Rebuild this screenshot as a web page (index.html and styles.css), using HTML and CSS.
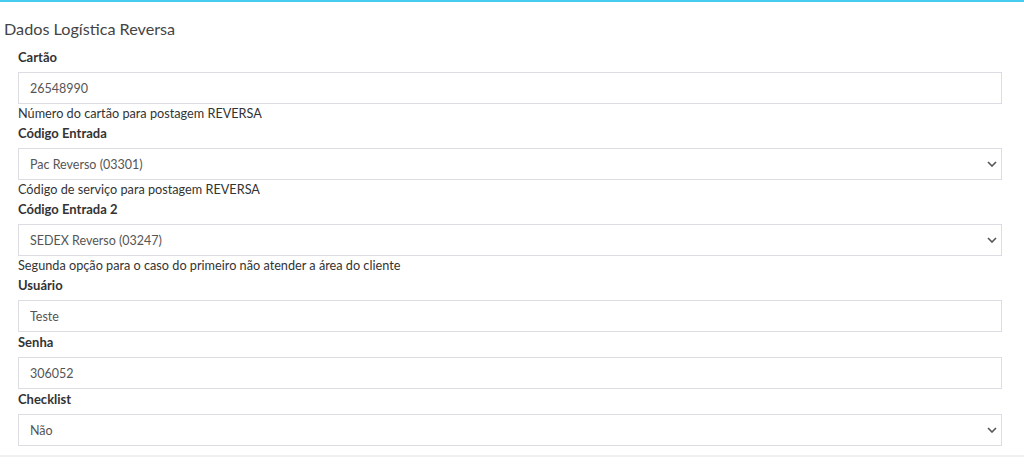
FILE: index.html
```html
<!DOCTYPE html>
<html lang="pt-BR">
<head>
<meta charset="utf-8">
<title>Dados Logística Reversa</title>
<link rel="stylesheet" href="styles.css">
</head>
<body>
<div class="box">
  <div class="box-header"><h3 class="box-title">Dados Logística Reversa</h3></div>
  <div class="box-body">
    <div class="form-group">
      <label class="label">Cartão</label>
      <input class="form-control" type="text" value="26548990">
      <p class="help">Número do cartão para postagem REVERSA</p>
    </div>
    <div class="form-group">
      <label class="label">Código Entrada</label>
      <div class="select-wrap">
        <select class="form-control"><option>Pac Reverso (03301)</option></select>
        <svg class="chev" width="10" height="6" viewBox="0 0 10 6"><path d="M1 1l4 4 4-4" fill="none" stroke="#555" stroke-width="1.6"/></svg>
      </div>
      <p class="help">Código de serviço para postagem REVERSA</p>
    </div>
    <div class="form-group">
      <label class="label">Código Entrada 2</label>
      <div class="select-wrap">
        <select class="form-control"><option>SEDEX Reverso (03247)</option></select>
        <svg class="chev" width="10" height="6" viewBox="0 0 10 6"><path d="M1 1l4 4 4-4" fill="none" stroke="#555" stroke-width="1.6"/></svg>
      </div>
      <p class="help">Segunda opção para o caso do primeiro não atender a área do cliente</p>
    </div>
    <div class="form-group">
      <label class="label">Usuário</label>
      <input class="form-control" type="text" value="Teste">
    </div>
    <div class="form-group">
      <label class="label">Senha</label>
      <input class="form-control" type="text" value="306052">
    </div>
    <div class="form-group">
      <label class="label">Checklist</label>
      <div class="select-wrap">
        <select class="form-control"><option>Não</option></select>
        <svg class="chev" width="10" height="6" viewBox="0 0 10 6"><path d="M1 1l4 4 4-4" fill="none" stroke="#555" stroke-width="1.6"/></svg>
      </div>
    </div>
  </div>
</div>
</body>
</html>
```
FILE: styles.css
```css
html, body {
  margin: 0;
  padding: 0;
  background: #fff;
}
body {
  font-family: "Lato", "Liberation Sans", sans-serif;
  font-size: 13px;
  color: #333;
}
.box {
  border-top: 2px solid #45cbef;
  border-bottom: 2px solid #f0f0f0;
  background: #fff;
}
.box-header {
  padding: 17px 4px 0;
}
.box-title {
  margin: 0;
  font-size: 16.2px;
  font-weight: normal;
  line-height: 20px;
  color: #444;
}
.box-body {
  padding: 8px 22px 9px 18px;
}
.label {
  display: block;
  font-weight: bold;
  line-height: 20px;
  margin-bottom: 5px;
  color: #333;
}
.form-control {
  display: block;
  box-sizing: border-box;
  width: 100%;
  height: 32px;
  margin: 0;
  padding: 0 11px;
  border: 1px solid #dcdce2;
  border-radius: 0;
  background: #fff;
  font-family: inherit;
  font-size: 12.5px;
  color: #555;
  outline: none;
  -webkit-appearance: none;
  appearance: none;
}
.select-wrap {
  position: relative;
}
.chev {
  position: absolute;
  right: 5px;
  top: 13px;
  pointer-events: none;
}
.help {
  margin: 0;
  font-size: 12.7px;
  line-height: 19px;
  color: #333;
}
```
